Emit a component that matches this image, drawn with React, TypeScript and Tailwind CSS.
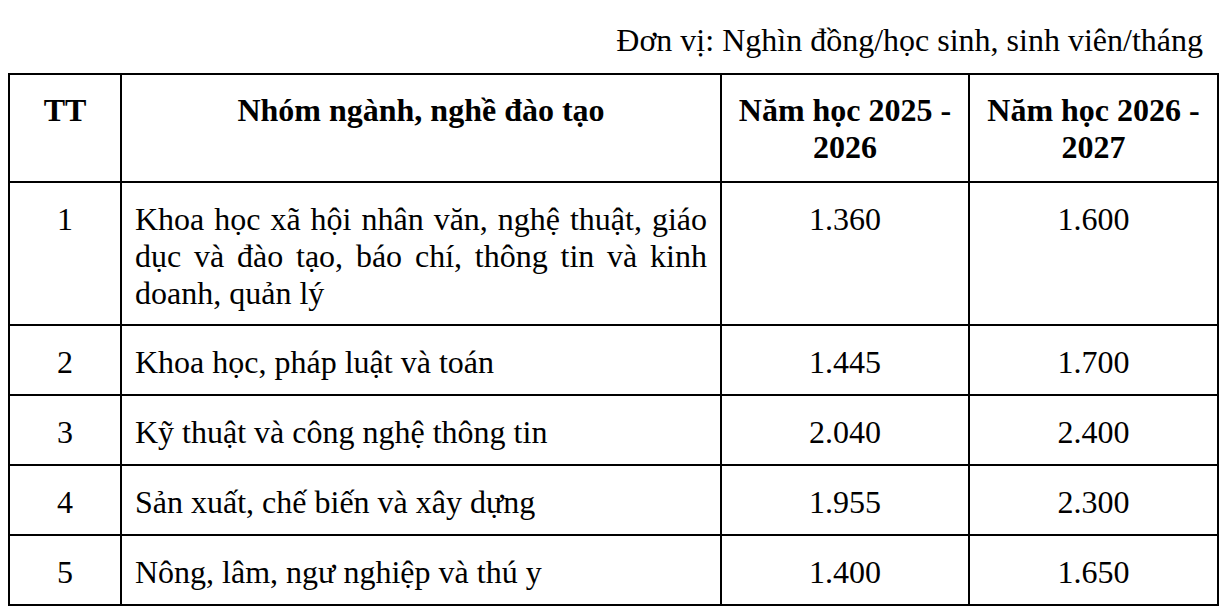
const rows = [
  {
    tt: "1",
    name: "Khoa học xã hội nhân văn, nghệ thuật, giáo dục và đào tạo, báo chí, thông tin và kinh doanh, quản lý",
    y1: "1.360",
    y2: "1.600",
  },
  { tt: "2", name: "Khoa học, pháp luật và toán", y1: "1.445", y2: "1.700" },
  { tt: "3", name: "Kỹ thuật và công nghệ thông tin", y1: "2.040", y2: "2.400" },
  { tt: "4", name: "Sản xuất, chế biến và xây dựng", y1: "1.955", y2: "2.300" },
  { tt: "5", name: "Nông, lâm, ngư nghiệp và thú y", y1: "1.400", y2: "1.650" },
];

export default function App() {
  return (
    <div className="w-[1224px] h-[612px] bg-white text-black [font-family:Liberation_Serif,Times_New_Roman,serif] text-[32px] leading-[37px] overflow-hidden">
      {/* Đơn vị */}
      <div className="h-[73px] pt-[22px] pr-[21px] text-right">
        Đơn vị: Nghìn đồng/học sinh, sinh viên/tháng
      </div>

      <table className="ml-[8px] w-[1209px] table-fixed border-collapse">
        <colgroup>
          <col className="w-[112px]" />
          <col className="w-[600px]" />
          <col className="w-[248px]" />
          <col className="w-[249px]" />
        </colgroup>
        <thead>
          <tr className="h-[108px] font-bold">
            <th className="border-2 border-black align-top pt-[17px] px-3 text-center">TT</th>
            <th className="border-2 border-black align-top pt-[17px] px-3 text-center">
              Nhóm ngành, nghề đào tạo
            </th>
            <th className="border-2 border-black align-top pt-[17px] px-3 text-center">
              Năm học 2025 - 2026
            </th>
            <th className="border-2 border-black align-top pt-[17px] px-3 text-center">
              Năm học 2026 - 2027
            </th>
          </tr>
        </thead>
        <tbody>
          {rows.map((r, i) => (
            <tr key={r.tt} className={i === 0 ? "h-[143px]" : "h-[70px]"}>
              <td className="border-2 border-black align-top pt-[18px] text-center">{r.tt}</td>
              <td className="border-2 border-black align-top pt-[18px] pl-[13px] pr-[13px] text-justify">
                {r.name}
              </td>
              <td className="border-2 border-black align-top pt-[18px] text-center">{r.y1}</td>
              <td className="border-2 border-black align-top pt-[18px] text-center">{r.y2}</td>
            </tr>
          ))}
        </tbody>
      </table>
    </div>
  );
}
